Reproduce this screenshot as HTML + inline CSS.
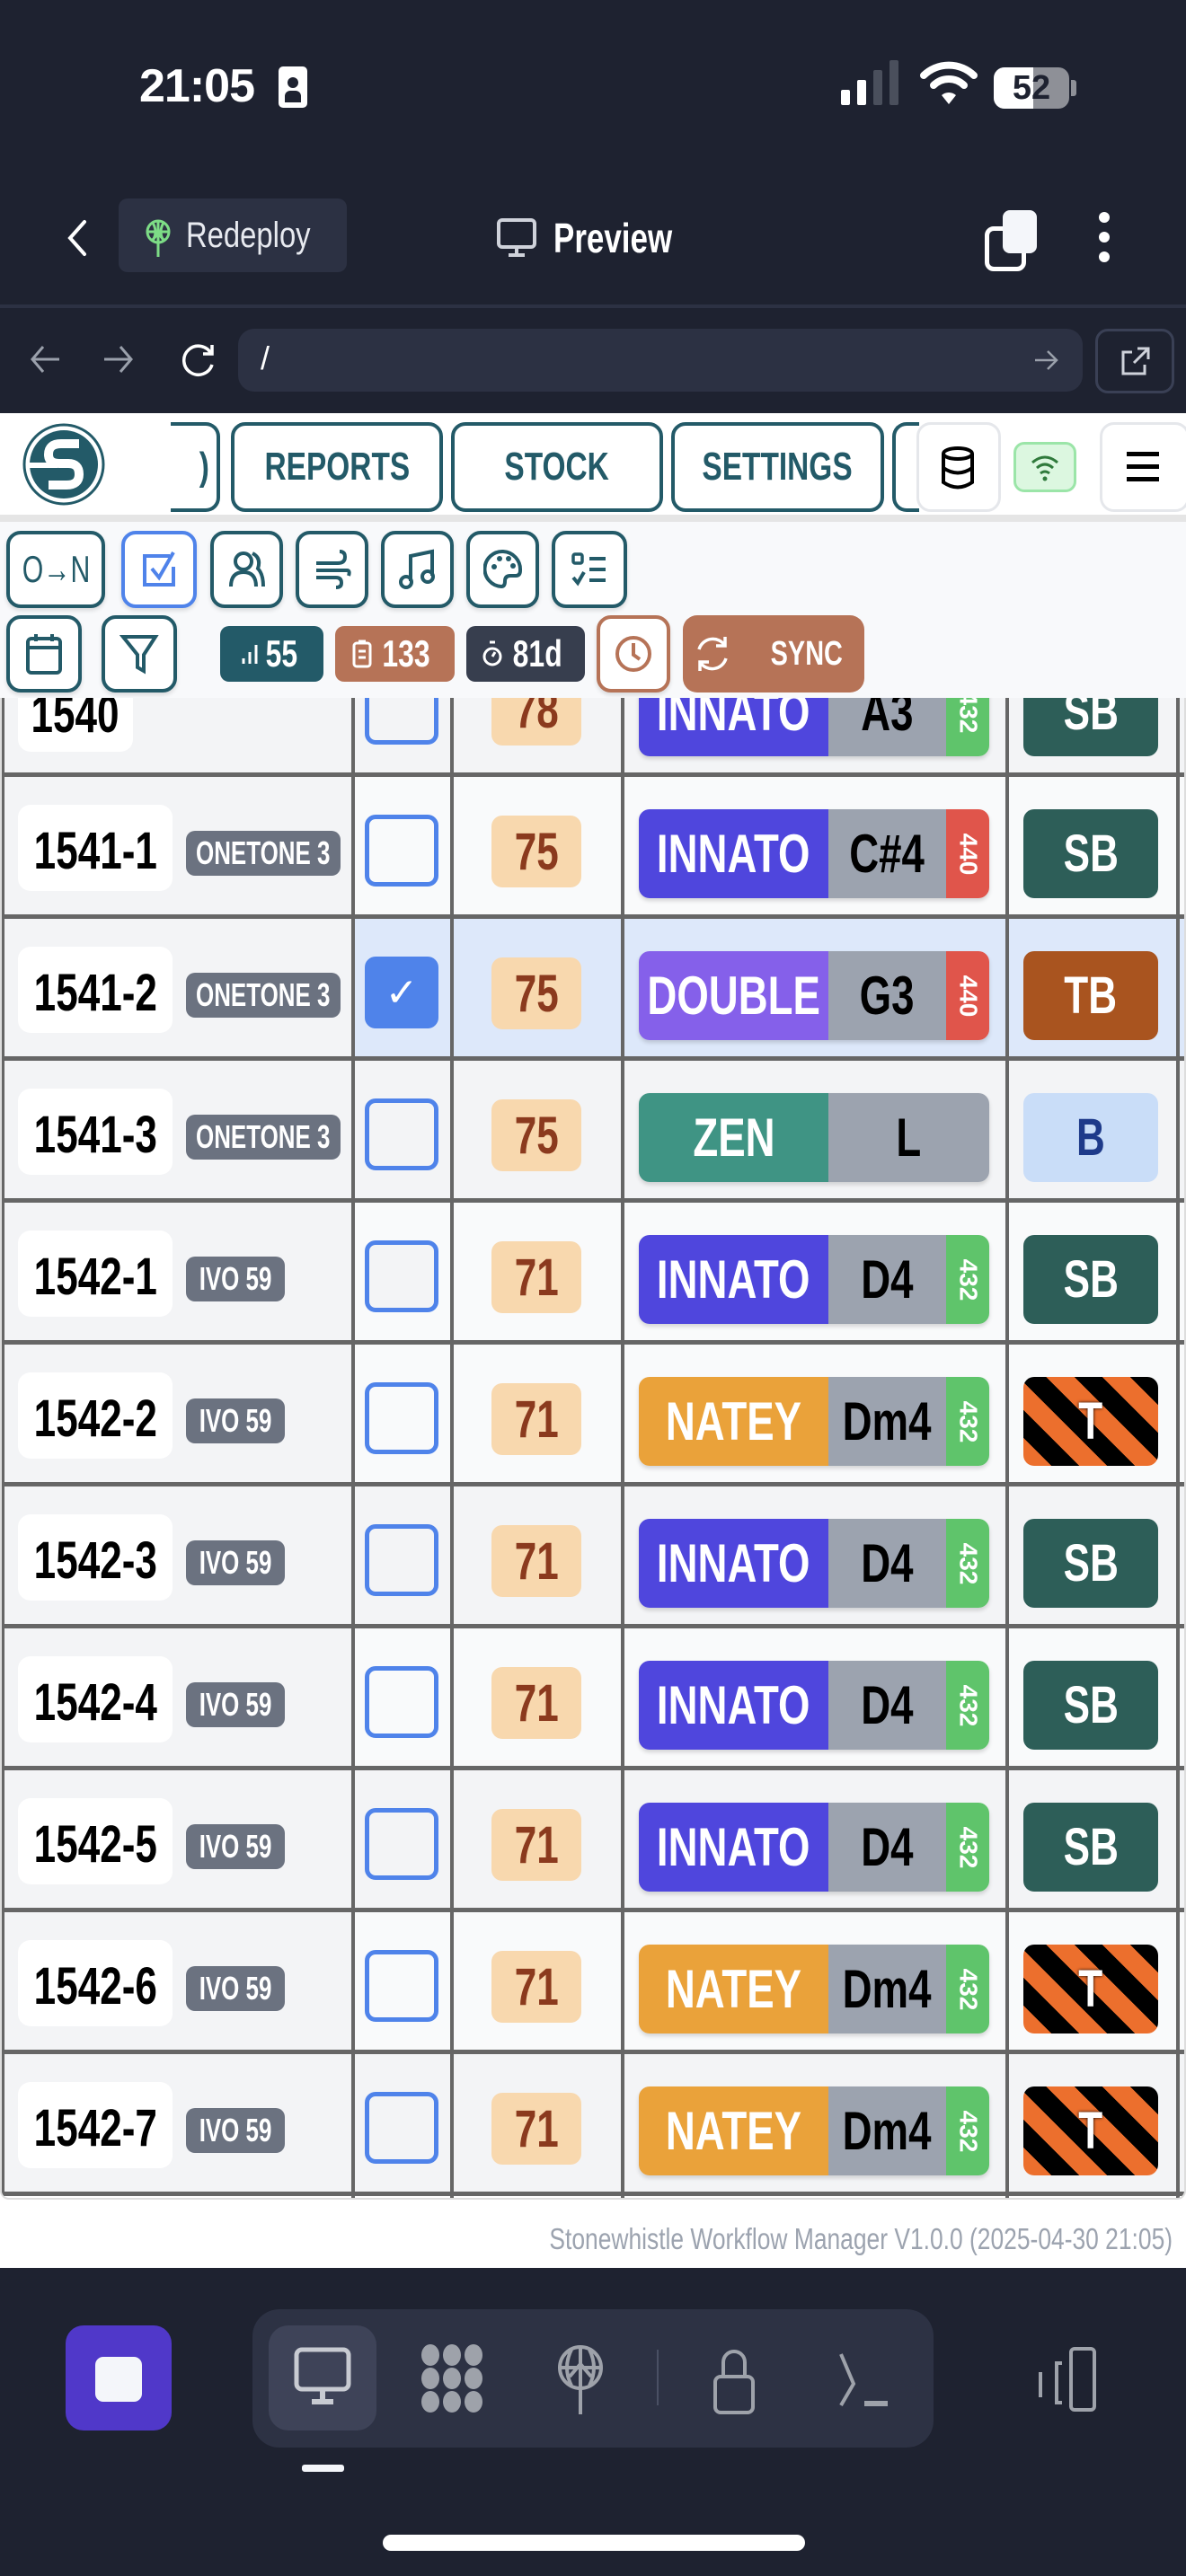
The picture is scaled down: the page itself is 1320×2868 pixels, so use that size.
<!DOCTYPE html>
<html><head><meta charset="utf-8">
<style>
*{box-sizing:border-box;margin:0;padding:0}
body{width:1320px;height:2868px;position:relative;overflow:hidden;background:#fff;font-family:"Liberation Sans",sans-serif}
.a{position:absolute}
.s{display:inline-block;transform:scaleX(.76);white-space:nowrap;font-weight:bold}
.dark{background:#1e2230}
.fc{display:flex;align-items:center;justify-content:center}
.tab{position:absolute;top:470px;height:100px;border:4px solid #235a68;border-radius:16px;color:#235a68;font-size:44px;display:flex;align-items:center;justify-content:center;white-space:nowrap}
.tb{position:absolute;height:86px;border:4px solid #235a68;border-radius:16px;background:#fff;display:flex;align-items:center;justify-content:center;box-shadow:0 3px 5px rgba(0,0,0,.12)}
.bd{position:absolute;height:62px;top:697px;border-radius:10px;color:#fff;font-size:42px;display:flex;align-items:center;justify-content:center;gap:2px}
.r{position:absolute;left:0;width:1320px;height:158px;background:#f9fafb;border-bottom:5px solid #666}
.r.alt{background:#f3f4f6}
.r.sel{background:#dde8fa}
.c1{position:absolute;left:0;top:0;width:391px;height:153px;background:#f3f4f6}
.id{position:absolute;left:18px;top:31px;width:172px;height:96px;display:flex;align-items:center;justify-content:center;padding-top:6px;background:#fff;border-radius:14px;font-size:58px;color:#000}
.tg{position:absolute;left:205px;top:60px;width:172px;height:50px;display:flex;align-items:center;justify-content:center;background:#6b7280;border-radius:10px;color:#fff;font-size:36px}
.tg .s{transform:scaleX(.72)}
.tg.i{width:110px}
.cb{position:absolute;left:404px;top:42px;width:82px;height:80px;border:5px solid #4f83ea;border-radius:12px}
.nb{position:absolute;left:545px;top:43px;width:100px;height:80px;background:#f8d8ae;border-radius:12px;color:#8b3a1e;font-size:58px;display:flex;align-items:center;justify-content:center}
.ins{position:absolute;left:709px;top:36px;width:390px;height:99px;border-radius:12px;overflow:hidden;display:flex;box-shadow:0 3px 5px rgba(0,0,0,.15)}
.ins .n{width:211px;color:#fff;font-size:60px;display:flex;align-items:center;justify-content:center}
.ins .k{width:131px;background:#9ca3af;color:#000;font-size:60px;display:flex;align-items:center;justify-content:center}
.ins .f{width:48px;color:#fff;font-size:28px;display:flex;align-items:center;justify-content:center}
.ins .f span{transform:rotate(90deg);display:block;font-weight:bold}
.ty{position:absolute;left:1137px;top:36px;width:150px;height:99px;border-radius:12px;color:#fff;font-size:58px;display:flex;align-items:center;justify-content:center}
.sb{background:#2d5e58}
.st{background:repeating-linear-gradient(45deg,#ec6f2d 0 22px,#000 22px 44px);text-shadow:0 0 4px #000}
.vl{position:absolute;top:0;width:4px;height:1670px;background:#666}
.g{background:#5fc46b}.rd{background:#e0554b}
</style></head><body>
<!-- status + header -->
<div class="a dark" style="left:0;top:0;width:1320px;height:460px"></div>
<div class="a" style="left:155px;top:66px;color:#fff;font-weight:bold;font-size:52px;letter-spacing:-1px">21:05</div>
<div class="a" style="left:310px;top:74px;width:32px;height:46px;background:#fff;border-radius:5px"><div class="a" style="left:10px;top:12px;width:12px;height:12px;border-radius:6px;background:#1e2230"></div><div class="a" style="left:7px;top:27px;width:18px;height:13px;border-radius:6px 6px 0 0;background:#1e2230"></div></div>
<div class="a" style="left:936px;top:100px;width:10px;height:17px;background:#fff;border-radius:2px"></div>
<div class="a" style="left:954px;top:89px;width:10px;height:28px;background:#fff;border-radius:2px"></div>
<div class="a" style="left:972px;top:78px;width:10px;height:39px;background:#4a4f5c;border-radius:2px"></div>
<div class="a" style="left:990px;top:67px;width:10px;height:50px;background:#4a4f5c;border-radius:2px"></div>
<svg class="a" style="left:1024px;top:66px" width="64" height="52" viewBox="0 0 64 52"><path d="M4 18 A40 40 0 0 1 60 18" stroke="#fff" stroke-width="8" fill="none" stroke-linecap="round"/><path d="M15 29 A24 24 0 0 1 49 29" stroke="#fff" stroke-width="8" fill="none" stroke-linecap="round"/><path d="M24 40 L32 50 L40 40 A12 12 0 0 0 24 40Z" fill="#fff"/></svg>
<div class="a" style="left:1106px;top:75px;width:84px;height:46px;border-radius:12px;background:#8e9097;overflow:hidden"><div class="a" style="left:0;top:0;width:44px;height:46px;background:#fff"></div><div class="a" style="left:0;top:0;width:84px;text-align:center;font-weight:bold;font-size:38px;line-height:46px;color:#1e2230">52</div></div>
<div class="a" style="left:1192px;top:89px;width:6px;height:18px;background:#8e9097;border-radius:0 3px 3px 0"></div>

<svg class="a" style="left:70px;top:243px" width="30" height="44"><path d="M24 4 L8 22 L24 40" stroke="#fff" stroke-width="4" fill="none" stroke-linecap="round"/></svg>
<div class="a" style="left:132px;top:221px;width:254px;height:82px;background:#2c3143;border-radius:10px"></div>
<svg class="a" style="left:160px;top:242px" width="32" height="46" viewBox="0 0 32 46"><circle cx="16" cy="16" r="12" stroke="#7ddc86" stroke-width="3" fill="none"/><path d="M4 16 H28 M16 4 V44 M9 26 L16 18 L23 26 M10 6 Q16 16 10 26 M22 6 Q16 16 22 26" stroke="#7ddc86" stroke-width="3" fill="none"/></svg>
<div class="a" style="left:207px;top:240px;color:#e8eaf0;font-size:40px;transform:scaleX(.82);transform-origin:left">Redeploy</div>
<svg class="a" style="left:552px;top:242px" width="46" height="46" viewBox="0 0 46 46"><rect x="3" y="3" width="40" height="30" rx="4" stroke="#cfd2da" stroke-width="4" fill="none"/><path d="M23 33 V42 M14 42 H32" stroke="#cfd2da" stroke-width="4"/></svg>
<div class="a" style="left:616px;top:238px;color:#fff;font-size:46px;font-weight:bold;transform:scaleX(.76);transform-origin:left">Preview</div>
<div class="a" style="left:1096px;top:252px;width:46px;height:50px;border:5px solid #fff;border-radius:10px"></div>
<div class="a" style="left:1116px;top:234px;width:38px;height:48px;background:#f4f6fa;border-radius:8px"></div>
<div class="a" style="left:1223px;top:236px;width:12px;height:12px;border-radius:6px;background:#fff"></div>
<div class="a" style="left:1223px;top:258px;width:12px;height:12px;border-radius:6px;background:#fff"></div>
<div class="a" style="left:1223px;top:280px;width:12px;height:12px;border-radius:6px;background:#fff"></div>
<div class="a" style="left:0;top:339px;width:1320px;height:4px;background:#2c3143"></div>
<svg class="a" style="left:30px;top:380px" width="220" height="40" viewBox="0 0 220 40"><path d="M36 20 H6 M18 6 L6 20 L18 34" stroke="#9aa0ab" stroke-width="3" fill="none"/><path d="M86 20 H116 M104 6 L116 20 L104 34" stroke="#9aa0ab" stroke-width="3" fill="none"/><path d="M205 14 A16 16 0 1 0 206 26 M206 4 V14 H196" stroke="#fff" stroke-width="3.5" fill="none"/></svg>
<div class="a" style="left:265px;top:366px;width:940px;height:70px;background:#2c3143;border-radius:18px"></div>
<div class="a" style="left:290px;top:378px;color:#fff;font-size:36px">/</div>
<svg class="a" style="left:1150px;top:388px" width="30" height="26"><path d="M2 13 H26 M16 3 L26 13 L16 23" stroke="#9aa0ab" stroke-width="2.5" fill="none"/></svg>
<div class="a" style="left:1219px;top:366px;width:88px;height:72px;border:3px solid #3a4055;border-radius:14px"></div>
<svg class="a" style="left:1246px;top:384px" width="36" height="36"><path d="M14 8 H4 V32 H28 V22 M20 4 H32 V16 M32 4 L16 20" stroke="#cfd2da" stroke-width="3" fill="none"/></svg>

<!-- app top nav -->
<div class="a" style="left:0;top:460px;width:1320px;height:113px;background:#fff"></div>
<div class="a" style="left:0;top:573px;width:1320px;height:8px;background:#e5e5e5"></div>
<svg class="a" style="left:24px;top:470px" width="94" height="94" viewBox="0 0 94 94"><circle cx="47" cy="47" r="44" fill="#fff" stroke="#235a68" stroke-width="3"/><circle cx="47" cy="47" r="38" fill="#235a68"/><path d="M64 24 H44 Q30 24 30 36 Q30 46 42 46 H52 Q64 46 64 58 Q64 70 50 70 H30" stroke="#fff" stroke-width="10" fill="none"/><path d="M9 48 H40" stroke="#fff" stroke-width="6"/></svg>
<div class="tab" style="left:190px;width:55px;border-left:none;border-radius:0 16px 16px 0;justify-content:flex-end;padding-right:6px"><b class="s">)</b></div>
<div class="tab" style="left:257px;width:236px"><b class="s">REPORTS</b></div>
<div class="tab" style="left:502px;width:236px"><b class="s">STOCK</b></div>
<div class="tab" style="left:747px;width:237px"><b class="s">SETTINGS</b></div>
<div class="tab" style="left:993px;width:30px;border-right:none;border-radius:16px 0 0 16px"></div>
<div class="a" style="left:1020px;top:470px;width:94px;height:100px;background:#fff;border:3px solid #e5e7eb;border-radius:16px"></div>
<svg class="a" style="left:1046px;top:496px" width="40" height="50" viewBox="0 0 40 50"><ellipse cx="20" cy="9" rx="16" ry="6" stroke="#000" stroke-width="4" fill="none"/><path d="M4 9 V41 Q20 52 36 41 V9 M4 25 Q20 36 36 25" stroke="#000" stroke-width="4" fill="none"/></svg>
<div class="a" style="left:1128px;top:492px;width:70px;height:56px;background:#dcf7e0;border:3px solid #9be5a8;border-radius:12px"></div>
<svg class="a" style="left:1145px;top:503px" width="36" height="34" viewBox="0 0 36 34"><path d="M4 12 Q18 0 32 12 M9 18 Q18 10 27 18 M13 24 Q18 20 23 24" stroke="#2f7a3b" stroke-width="3" fill="none"/><circle cx="18" cy="30" r="2.5" fill="#2f7a3b"/></svg>
<div class="a" style="left:1224px;top:470px;width:100px;height:100px;background:#fff;border:3px solid #e5e7eb;border-radius:16px"></div>
<div class="a" style="left:1254px;top:503px;width:36px;height:5px;background:#000"></div>
<div class="a" style="left:1254px;top:517px;width:36px;height:5px;background:#000"></div>
<div class="a" style="left:1254px;top:531px;width:36px;height:5px;background:#000"></div>

<!-- toolbar -->
<div class="a" style="left:0;top:581px;width:1320px;height:196px;background:#f8f9fb"></div>
<div class="tb" style="left:7px;top:591px;width:110px;font-size:42px;color:#235a68"><span style="display:inline-block;transform:scaleX(.72)">O→N</span></div>
<div class="tb" style="left:135px;top:591px;width:84px;border-color:#4f83ea"><svg width="44" height="46" viewBox="0 0 44 46"><path d="M34 8 H6 V40 H38 V20" stroke="#4f83ea" stroke-width="4" fill="none"/><path d="M14 22 L22 32 L38 4" stroke="#4f83ea" stroke-width="4" fill="none"/></svg></div>
<div class="tb" style="left:234px;top:591px;width:81px"><svg width="44" height="46" viewBox="0 0 44 46"><circle cx="18" cy="14" r="9" stroke="#235a68" stroke-width="4" fill="none"/><path d="M4 42 Q4 26 18 26 Q32 26 32 42 M28 5 Q38 10 34 22 Q40 28 40 42" stroke="#235a68" stroke-width="4" fill="none"/></svg></div>
<div class="tb" style="left:329px;top:591px;width:81px"><svg width="44" height="46" viewBox="0 0 44 46"><path d="M4 16 H28 Q36 16 36 9 Q36 3 30 3 M4 24 H38 Q42 24 40 30 M4 32 H26 Q32 32 32 38 Q32 43 26 43" stroke="#235a68" stroke-width="4" fill="none"/></svg></div>
<div class="tb" style="left:424px;top:591px;width:81px"><svg width="44" height="46" viewBox="0 0 44 46"><path d="M14 36 V8 L38 3 V30" stroke="#235a68" stroke-width="4" fill="none"/><circle cx="9" cy="37" r="6" stroke="#235a68" stroke-width="4" fill="none"/><circle cx="33" cy="31" r="6" stroke="#235a68" stroke-width="4" fill="none"/></svg></div>
<div class="tb" style="left:519px;top:591px;width:81px"><svg width="44" height="46" viewBox="0 0 44 46"><path d="M22 3 A19 19 0 0 0 20 42 Q24 42 24 36 Q24 30 30 30 H36 Q41 30 41 24 A20 20 0 0 0 22 3Z" stroke="#235a68" stroke-width="4" fill="none"/><circle cx="12" cy="20" r="3" fill="#235a68"/><circle cx="18" cy="11" r="3" fill="#235a68"/><circle cx="28" cy="11" r="3" fill="#235a68"/><circle cx="33" cy="19" r="3" fill="#235a68"/></svg></div>
<div class="tb" style="left:614px;top:591px;width:84px"><svg width="44" height="46" viewBox="0 0 44 46"><rect x="4" y="6" width="10" height="10" rx="2" stroke="#235a68" stroke-width="3.5" fill="none"/><path d="M22 11 H40 M22 23 H40 M22 35 H40 M4 32 L9 38 L16 26" stroke="#235a68" stroke-width="4" fill="none"/></svg></div>
<div class="tb" style="left:7px;top:685px;width:84px"><svg width="44" height="50" viewBox="0 0 44 50"><rect x="4" y="8" width="36" height="38" rx="4" stroke="#235a68" stroke-width="4" fill="none"/><path d="M4 18 H40 M13 3 V11 M31 3 V11" stroke="#235a68" stroke-width="4"/></svg></div>
<div class="tb" style="left:113px;top:685px;width:84px"><svg width="44" height="50" viewBox="0 0 44 50"><path d="M4 6 H40 L27 26 V44 L20 40 V26 Z" stroke="#235a68" stroke-width="4" fill="none"/></svg></div>
<div class="bd" style="left:245px;width:115px;background:#235a68"><svg width="20" height="26"><path d="M3 24 V18 M10 24 V11 M17 24 V3" stroke="#fff" stroke-width="3"/></svg><b class="s">55</b></div>
<div class="bd" style="left:373px;width:133px;background:#b67357"><svg width="24" height="34"><rect x="3" y="5" width="18" height="26" rx="3" stroke="#fff" stroke-width="3" fill="none"/><path d="M8 3 H16 M8 14 H16 M8 21 H16" stroke="#fff" stroke-width="3"/></svg><b class="s">133</b></div>
<div class="bd" style="left:519px;width:132px;background:#373e4e"><svg width="24" height="34"><circle cx="12" cy="20" r="9" stroke="#fff" stroke-width="3" fill="none"/><path d="M9 4 H15 M12 20 L15 15" stroke="#fff" stroke-width="3"/></svg><b class="s">81d</b></div>
<div class="tb" style="left:664px;top:685px;width:82px;border-color:#b67357"><svg width="44" height="44"><circle cx="22" cy="22" r="18" stroke="#b67357" stroke-width="4" fill="none"/><path d="M22 10 V23 L29 28" stroke="#b67357" stroke-width="4" fill="none"/></svg></div>
<div class="a fc" style="left:760px;top:685px;width:202px;height:86px;background:#b67357;border-radius:16px;color:#fff;font-size:38px;gap:30px"><svg width="44" height="46" viewBox="0 0 44 46"><path d="M36 14 A16 16 0 0 0 7 18 M8 32 A16 16 0 0 0 37 28 M36 4 V14 H26 M8 42 V32 H18" stroke="#fff" stroke-width="3.5" fill="none"/></svg><b class="s">SYNC</b></div>

<!-- table -->
<div class="a" style="left:0;top:777px;width:1320px;height:1672px;overflow:hidden;border:2px solid #ddd;border-top:none;border-radius:0 0 10px 10px;background:#fff">
<div class="r alt" style="top:-70px"><div class="c1"></div><div class="id" style="width:128px;height:90px;top:40px"><b class="s">1540</b></div><div class="cb" style="background:#f3f4f6"></div><div class="nb"><b class="s">78</b></div><div class="ins"><div class="n" style="background:#4f46dd"><b class="s">INNATO</b></div><div class="k"><b class="s">A3</b></div><div class="f g"><span>432</span></div></div><div class="ty sb"><b class="s">SB</b></div></div>
<div class="r" style="top:88px"><div class="c1"></div><div class="id"><b class="s">1541-1</b></div><div class="tg"><b class="s">ONETONE 3</b></div><div class="cb"></div><div class="nb"><b class="s">75</b></div><div class="ins"><div class="n" style="background:#4f46dd"><b class="s">INNATO</b></div><div class="k"><b class="s">C#4</b></div><div class="f rd"><span>440</span></div></div><div class="ty sb"><b class="s">SB</b></div></div>
<div class="r sel" style="top:246px"><div class="c1"></div><div class="id"><b class="s">1541-2</b></div><div class="tg"><b class="s">ONETONE 3</b></div><div class="cb fc" style="background:#4f83ea;color:#fff;font-size:44px;font-family:'DejaVu Sans',sans-serif">✓</div><div class="nb"><b class="s">75</b></div><div class="ins"><div class="n" style="background:#8560ea"><b class="s">DOUBLE</b></div><div class="k"><b class="s">G3</b></div><div class="f rd"><span>440</span></div></div><div class="ty" style="background:#a9541f"><b class="s">TB</b></div></div>
<div class="r alt" style="top:404px"><div class="c1"></div><div class="id"><b class="s">1541-3</b></div><div class="tg"><b class="s">ONETONE 3</b></div><div class="cb"></div><div class="nb"><b class="s">75</b></div><div class="ins"><div class="n" style="background:#3f9484"><b class="s">ZEN</b></div><div class="k" style="width:179px"><b class="s">L</b></div></div><div class="ty" style="background:#c9ddf8;color:#1e3a8a"><b class="s">B</b></div></div>
<div class="r" style="top:562px"><div class="c1"></div><div class="id"><b class="s">1542-1</b></div><div class="tg i"><b class="s">IVO 59</b></div><div class="cb" style="background:#f3f4f6"></div><div class="nb"><b class="s">71</b></div><div class="ins"><div class="n" style="background:#4f46dd"><b class="s">INNATO</b></div><div class="k"><b class="s">D4</b></div><div class="f g"><span>432</span></div></div><div class="ty sb"><b class="s">SB</b></div></div>
<div class="r" style="top:720px"><div class="c1"></div><div class="id"><b class="s">1542-2</b></div><div class="tg i"><b class="s">IVO 59</b></div><div class="cb"></div><div class="nb"><b class="s">71</b></div><div class="ins"><div class="n" style="background:#eaa23a"><b class="s">NATEY</b></div><div class="k"><b class="s">Dm4</b></div><div class="f g"><span>432</span></div></div><div class="ty st"><b class="s">T</b></div></div>
<div class="r alt" style="top:878px"><div class="c1"></div><div class="id"><b class="s">1542-3</b></div><div class="tg i"><b class="s">IVO 59</b></div><div class="cb"></div><div class="nb"><b class="s">71</b></div><div class="ins"><div class="n" style="background:#4f46dd"><b class="s">INNATO</b></div><div class="k"><b class="s">D4</b></div><div class="f g"><span>432</span></div></div><div class="ty sb"><b class="s">SB</b></div></div>
<div class="r" style="top:1036px"><div class="c1"></div><div class="id"><b class="s">1542-4</b></div><div class="tg i"><b class="s">IVO 59</b></div><div class="cb"></div><div class="nb"><b class="s">71</b></div><div class="ins"><div class="n" style="background:#4f46dd"><b class="s">INNATO</b></div><div class="k"><b class="s">D4</b></div><div class="f g"><span>432</span></div></div><div class="ty sb"><b class="s">SB</b></div></div>
<div class="r alt" style="top:1194px"><div class="c1"></div><div class="id"><b class="s">1542-5</b></div><div class="tg i"><b class="s">IVO 59</b></div><div class="cb"></div><div class="nb"><b class="s">71</b></div><div class="ins"><div class="n" style="background:#4f46dd"><b class="s">INNATO</b></div><div class="k"><b class="s">D4</b></div><div class="f g"><span>432</span></div></div><div class="ty sb"><b class="s">SB</b></div></div>
<div class="r" style="top:1352px"><div class="c1"></div><div class="id"><b class="s">1542-6</b></div><div class="tg i"><b class="s">IVO 59</b></div><div class="cb"></div><div class="nb"><b class="s">71</b></div><div class="ins"><div class="n" style="background:#eaa23a"><b class="s">NATEY</b></div><div class="k"><b class="s">Dm4</b></div><div class="f g"><span>432</span></div></div><div class="ty st"><b class="s">T</b></div></div>
<div class="r alt" style="top:1510px"><div class="c1"></div><div class="id"><b class="s">1542-7</b></div><div class="tg i"><b class="s">IVO 59</b></div><div class="cb"></div><div class="nb"><b class="s">71</b></div><div class="ins"><div class="n" style="background:#eaa23a"><b class="s">NATEY</b></div><div class="k"><b class="s">Dm4</b></div><div class="f g"><span>432</span></div></div><div class="ty st"><b class="s">T</b></div></div>
<div class="vl" style="left:0;width:3px"></div>
<div class="vl" style="left:389px"></div>
<div class="vl" style="left:499px"></div>
<div class="vl" style="left:689px"></div>
<div class="vl" style="left:1117px"></div>
<div class="vl" style="left:1307px"></div>
</div>

<!-- footer -->
<div class="a" style="right:15px;top:2474px;color:#9ca3af;font-size:33px;transform:scaleX(.8);transform-origin:right;white-space:nowrap">Stonewhistle Workflow Manager V1.0.0 (2025-04-30 21:05)</div>
<div class="a dark" style="left:0;top:2525px;width:1320px;height:343px"></div>
<div class="a" style="left:73px;top:2589px;width:118px;height:117px;background:#5038c9;border-radius:20px"></div>
<div class="a" style="left:106px;top:2624px;width:52px;height:50px;background:#f4f6fa;border-radius:9px"></div>
<div class="a" style="left:281px;top:2571px;width:758px;height:154px;background:#2d3244;border-radius:30px"></div>
<div class="a" style="left:299px;top:2589px;width:120px;height:117px;background:#3e4358;border-radius:22px"></div>
<svg class="a" style="left:326px;top:2612px" width="66" height="70" viewBox="0 0 66 70"><rect x="4" y="4" width="58" height="44" rx="6" stroke="#c8cbd2" stroke-width="5" fill="none"/><path d="M33 48 V60 M21 62 H45" stroke="#c8cbd2" stroke-width="6"/></svg>
<svg class="a" style="left:467px;top:2610px" width="72" height="76" viewBox="0 0 72 76"><g fill="#9ea2aa"><ellipse cx="12" cy="12" rx="10" ry="12"/><ellipse cx="36" cy="12" rx="10" ry="12"/><ellipse cx="60" cy="12" rx="10" ry="12"/><ellipse cx="12" cy="38" rx="10" ry="12"/><ellipse cx="36" cy="38" rx="10" ry="12"/><ellipse cx="60" cy="38" rx="10" ry="12"/><ellipse cx="12" cy="64" rx="10" ry="12"/><ellipse cx="36" cy="64" rx="10" ry="12"/><ellipse cx="60" cy="64" rx="10" ry="12"/></g></svg>
<svg class="a" style="left:618px;top:2610px" width="56" height="80" viewBox="0 0 56 80"><circle cx="28" cy="26" r="23" stroke="#9ea2aa" stroke-width="4" fill="none"/><path d="M5 26 H51 M28 3 V78 M16 36 L28 22 L40 36 M18 6 Q8 26 18 46 M38 6 Q48 26 38 46" stroke="#9ea2aa" stroke-width="4" fill="none"/></svg>
<div class="a" style="left:731px;top:2616px;width:2px;height:62px;background:#4a5064"></div>
<svg class="a" style="left:792px;top:2614px" width="50" height="76" viewBox="0 0 50 76"><path d="M13 32 V16 A12 12 0 0 1 37 16 V32" stroke="#9ea2aa" stroke-width="4" fill="none"/><rect x="4" y="32" width="42" height="40" rx="6" stroke="#9ea2aa" stroke-width="4" fill="none"/></svg>
<svg class="a" style="left:932px;top:2618px" width="58" height="64" viewBox="0 0 58 64"><path d="M4 3 L18 36 L4 60" stroke="#9ea2aa" stroke-width="4" fill="none"/><path d="M30 58 H56" stroke="#9ea2aa" stroke-width="6"/></svg>
<svg class="a" style="left:1152px;top:2611px" width="72" height="76" viewBox="0 0 72 76"><rect x="40" y="4" width="26" height="68" rx="4" stroke="#9ea2aa" stroke-width="4" fill="none"/><path d="M30 20 H24 V64 H30 M6 30 V58" stroke="#9ea2aa" stroke-width="4" fill="none"/></svg>
<div class="a" style="left:336px;top:2744px;width:47px;height:8px;background:#f4f6fa;border-radius:3px"></div>
<div class="a" style="left:426px;top:2822px;width:470px;height:18px;background:#fff;border-radius:9px"></div>
</body></html>
